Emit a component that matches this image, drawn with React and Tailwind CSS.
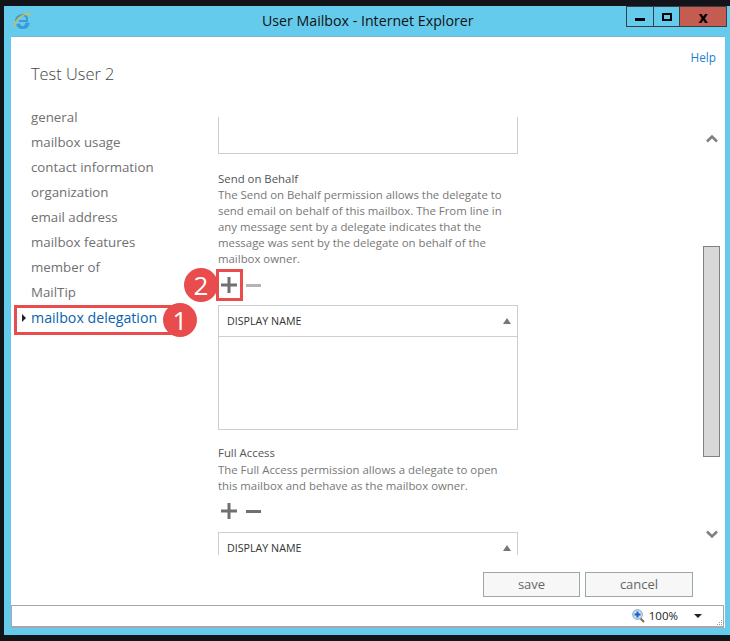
const navItems = [
  "general",
  "mailbox usage",
  "contact information",
  "organization",
  "email address",
  "mailbox features",
  "member of",
  "MailTip",
];

const IeLogo = () => (
  <svg width="18" height="17" viewBox="0 0 18 17" fill="none">
    <path d="M3 9a6 6 0 0 1 11-3.200V9H6M6 11.500a3.500 3.500 0 0 0 7 .2h2.500a6 6 0 0 1-11.500 .3" stroke="#3d9ad6" strokeWidth="2" />
    <path d="M1.500 14.500C0 12 6 4 13 2c3-1 4 0 3.500 2" stroke="#f1b81f" strokeWidth="1.300" />
  </svg>
);

const Chevron = ({ down }) => (
  <svg width="12" height="9" viewBox="0 0 12 9" fill="none">
    <path d={down ? "M1 1.500l5 5 5-5" : "M1 7.500l5-5 5 5"} stroke="#808080" strokeWidth="2.600" />
  </svg>
);

const Zoom = () => (
  <svg width="13" height="14" viewBox="0 0 13 14" fill="none">
    <path d="M8.500 9.500l3.500 3.500" stroke="#8a6a3a" strokeWidth="2" />
    <circle cx="5.500" cy="5.500" r="4.800" fill="#cfe4f6" stroke="#7a9cc0" />
    <path d="M5.500 2.500v6M2.500 5.500h6" stroke="#1a5fc4" strokeWidth="2" />
  </svg>
);

const Tool = ({ minusLight }) => (
  <div className="flex items-center gap-[9px] pl-[3px]">
    <svg width="16" height="16" viewBox="0 0 16 16"><path d="M6.500 0h3v6.500H16v3H9.500V16h-3V9.500H0v-3h6.500z" fill="#707070" /></svg>
    <div className={`w-[15px] h-[3px] ${minusLight ? "bg-[#b4b4b4]" : "bg-[#707070]"}`}></div>
  </div>
);

const TableHead = () => (
  <div className="flex h-[31px] items-center justify-between border-b border-[#c8d0d4] pl-[8px] pr-[6px] text-[10.700px] text-[#333]">
    <span>DISPLAY NAME</span>
    <span className="h-0 w-0 border-x-[4px] border-b-[6px] border-x-transparent border-b-[#777]"></span>
  </div>
);

export default function App() {
  return (
    <div className="h-[641px] w-[730px] overflow-hidden bg-[#131419] pt-[6px] pl-[4px] font-['Open_Sans',sans-serif]">
      <div className="flex h-[629px] flex-col bg-[#65cbec] pr-[5px] pb-[7px]">
        {/* title bar */}
        <div className="relative flex h-[30px] shrink-0 items-start">
          <div className="ml-[9px] mt-[6px]"><IeLogo /></div>
          <div className="absolute left-[258px] top-[5px] text-[14.200px] leading-[20px] text-[#111]">User Mailbox - Internet Explorer</div>
          <div className="-mr-[2px] ml-auto flex h-[21px] border-x border-y border-[#3a3f45]">
            <div className="flex w-[27px] items-start justify-center border-r border-[#3a3f45] pt-[11px]">
              <div className="h-[3px] w-[10px] bg-black"></div>
            </div>
            <div className="flex w-[26px] items-start justify-center border-r border-[#3a3f45] pt-[6px]">
              <div className="h-[8px] w-[10px] border-2 border-black"></div>
            </div>
            <div className="flex w-[46px] items-center justify-center bg-[#c45c52] text-[16px] font-bold leading-none text-black">x</div>
          </div>
        </div>

        <div className="relative ml-[7px] flex flex-1 flex-col border-t border-[#7cb6cf] bg-white">
          {/* header */}
          <div className="flex h-[68px] shrink-0 justify-between">
            <div className="pl-[20px] pt-[25px] text-[16.400px] font-light leading-[24px] text-[#444]">Test User 2</div>
            <div className="pr-[9px] pt-[12px] text-[11.800px] leading-[16px] text-[#1b7fd0]">Help</div>
          </div>

          {/* body */}
          <div className="flex h-[450px] shrink-0">
            <nav className="w-[207px] shrink-0 pl-[20px] text-[13.300px] leading-[25px] text-[#707070]">
              {navItems.map((item) => (
                <div key={item} className="h-[25px]">{item}</div>
              ))}
              <div className="h-[25px] text-[14.200px] text-[#0a63ad]">mailbox delegation</div>
            </nav>

            <div className="w-[300px] shrink-0 overflow-hidden pt-[12px] text-[11.400px] leading-[16px] text-[#777]">
              <div className="h-[37px] border-x border-b border-[#c8d0d4]"></div>
              <div className="mt-[17px] text-[#555]">Send on Behalf</div>
              <p>The Send on Behalf permission allows the delegate to send email on behalf of this mailbox. The From line in any message sent by a delegate indicates that the message was sent by the delegate on behalf of the mailbox owner.</p>
              <div className="mt-[10px]"><Tool minusLight /></div>
              <div className="mt-[12px] h-[125px] border border-[#c8d0d4]"><TableHead /></div>
              <div className="mt-[15px] text-[#555]">Full Access</div>
              <p className="mt-px">The Full Access permission allows a delegate to open this mailbox and behave as the mailbox owner.</p>
              <div className="mt-[9px]"><Tool /></div>
              <div className="mt-[13px] h-[125px] border border-[#c8d0d4]"><TableHead /></div>
            </div>

            {/* scrollbar */}
            <div className="ml-[185px] flex w-[17px] flex-col items-center pt-[29px]">
              <Chevron />
              <div className="mt-[103px] h-[211px] w-[17px] shrink-0 border border-[#808080] bg-[#d8d8d8]"></div>
              <div className="mt-[73px]"><Chevron down /></div>
            </div>
          </div>

          {/* footer */}
          <div className="flex h-[50px] shrink-0 justify-end gap-[5px] pr-[32px] pt-[17px]">
            <button className="h-[25px] w-[97px] border border-[#9aa8a8] bg-[#f7f7f7] text-[13px] text-[#666]">save</button>
            <button className="h-[25px] w-[108px] border border-[#9aa8a8] bg-[#f7f7f7] text-[13px] text-[#666]">cancel</button>
          </div>

          {/* status bar */}
          <div className="relative mr-px flex h-[23px] shrink-0 items-center justify-end border-y border-x border-[#a8a8a8] border-b-2 pr-[21px] text-[11.500px] text-[#222]">
            <Zoom />
            <span className="ml-[4px]">100%</span>
            <span className="ml-[16px] h-0 w-0 border-x-[4px] border-t-[4px] border-x-transparent border-t-[#222]"></span>
            <div className="absolute bottom-[1px] right-[1px] grid grid-cols-3 gap-px">
              <i></i><i></i><i className="h-px w-px bg-[#999]"></i>
              <i></i><i className="h-px w-px bg-[#999]"></i><i className="h-px w-px bg-[#999]"></i>
              <i className="h-px w-px bg-[#999]"></i><i className="h-px w-px bg-[#999]"></i><i className="h-px w-px bg-[#999]"></i>
            </div>
          </div>

          {/* screenshot annotations */}
          <div className="absolute left-[3px] top-[268px] h-[30px] w-[160px] border-[3px] border-[#e84c4c]"></div>
          <div className="absolute left-[205px] top-[232px] h-[32px] w-[27px] border-[3px] border-[#e84c4c]"></div>
          <div className="absolute left-[152px] top-[266px] flex h-[34px] w-[34px] items-center justify-center rounded-full bg-[#e84c4c] text-[26px] text-white">1</div>
          <div className="absolute left-[173px] top-[231px] flex h-[34px] w-[34px] items-center justify-center rounded-full bg-[#e84c4c] text-[26px] text-white">2</div>
          <div className="absolute left-[11px] top-[277px] h-0 w-0 border-y-[4px] border-l-[4px] border-y-transparent border-l-[#222]"></div>
        </div>
      </div>
    </div>
  );
}
